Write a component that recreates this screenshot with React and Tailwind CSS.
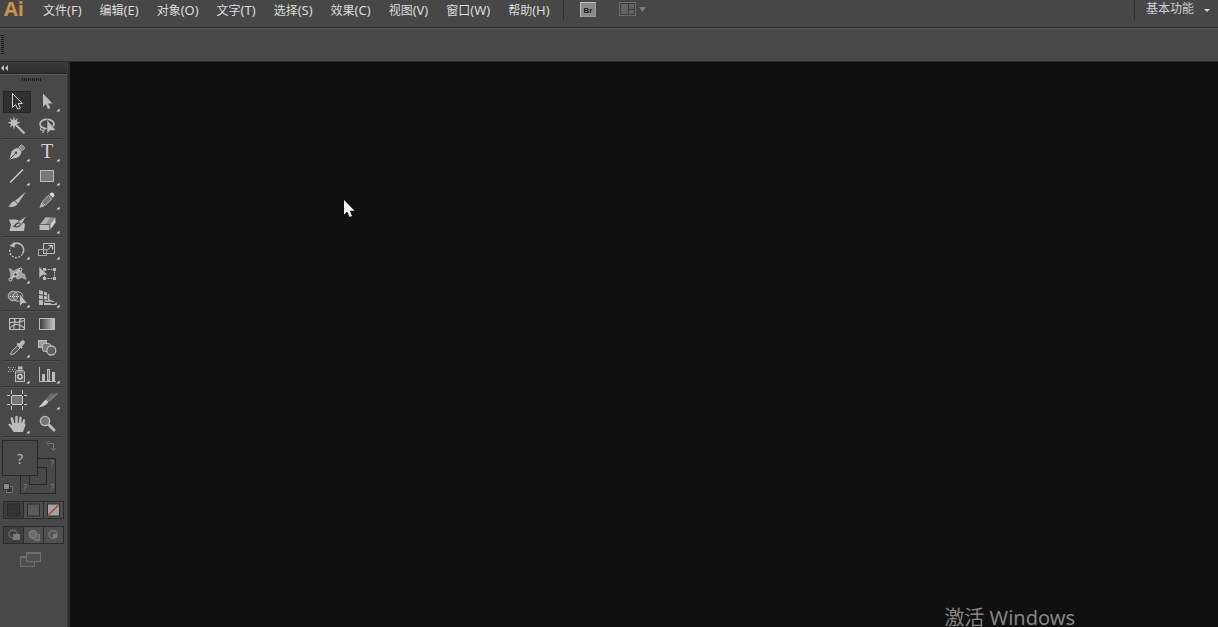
import React from "react";

const LIGHT = "#bcbcbc";
const MID = "#8a8a8a";
const DARK = "#484848";

const menus = [
  ["文件", "(F)"],
  ["编辑", "(E)"],
  ["对象", "(O)"],
  ["文字", "(T)"],
  ["选择", "(S)"],
  ["效果", "(C)"],
  ["视图", "(V)"],
  ["窗口", "(W)"],
  ["帮助", "(H)"],
];

const icons = {
  selection: (
    <path d="M10.5 3.5V17.5L13.5 14.6L15.8 19.2L18.4 18L16.2 13.5H20.3Z" fill="#303030" stroke="#d0d0d0" />
  ),
  direct: <path d="M11 3.5V16.8L13.8 14.2L16 19L18.3 18L16.2 13.4H20.5Z" fill={LIGHT} />,
  wand: (
    <g>
      <path d="M12 2.5L13 6.2L16 4L14.8 7.6L18.6 8.6L14.8 10L16 13.4L13 11.6L12 15.5L10.8 11.6L7.6 13.4L9.2 10L5.6 8.8L9.2 7.6L7.6 4L10.8 6.2Z" fill={LIGHT} />
      <path d="M14.5 11.5L22.5 19.5" stroke={LIGHT} strokeWidth="2.200" />
    </g>
  ),
  lasso: (
    <g>
      <ellipse cx="15" cy="10" rx="7" ry="4.600" fill="none" stroke={LIGHT} strokeWidth="1.700" />
      <path d="M9.500 13C7.500 14.500 8.500 16.500 11 16.500M11.500 14C13 15.500 12 17 10.500 19" fill="none" stroke={LIGHT} strokeWidth="1.200" />
      <path d="M15 5.500V20L18 16.500H24Z" fill={LIGHT} stroke={DARK} strokeWidth="0.600" />
    </g>
  ),
  pen: (
    <g>
      <path d="M7.5 19.500L9.500 11.500C11.500 9 14 8 16.500 8L19.500 11.200C19.500 13.500 18 16 15.500 17.500Z" fill={LIGHT} />
      <path d="M16.800 7.200L19.500 4.500L23 8L20.300 10.800Z" fill={MID} stroke={LIGHT} strokeWidth="0.800" />
      <path d="M8 19L13.300 13.500" stroke={DARK} />
      <circle cx="14" cy="12.800" r="1.300" fill={DARK} />
    </g>
  ),
  type: (
    <text x="15" y="18" textAnchor="middle" fontSize="20" fontFamily="Liberation Serif, serif" fill="#cfcfcf">T</text>
  ),
  line: <path d="M8 18.500L21 5.500" stroke="#d0d0d0" strokeWidth="1.400" />,
  rect: <rect x="8.5" y="6.5" width="13" height="11" fill="#777" stroke={LIGHT} />,
  brush: (
    <g>
      <path d="M24 3.800L16 15.500L13 12.800Z" fill={LIGHT} />
      <path d="M12.600 13.200L15.500 16C14 19 9.500 19.500 6 18.500C8.500 17.500 8.500 13.600 12.600 13.200Z" fill={LIGHT} />
    </g>
  ),
  pencil: (
    <g>
      <path d="M7.500 20L9.300 14.500L12.800 18Z" fill={LIGHT} />
      <path d="M9.800 14L16.500 7.300L20 10.700L13.200 17.500Z" fill="#777" stroke={LIGHT} strokeWidth="0.900" />
      <path d="M17.300 6.300C18.800 4 20.500 4 21.800 5.400C23 7 22.500 8.500 20.800 9.700Z" fill="#d8d8d8" />
    </g>
  ),
  blob: (
    <g>
      <path d="M7 7.500H14L19 9L23 12L22 19H7.500L9 13Z" fill={LIGHT} />
      <path d="M25 3.500L19.500 12.500L16 9.500Z" fill={LIGHT} stroke={DARK} strokeWidth="0.800" />
      <path d="M10.500 14.500C12.500 14.500 12.500 11 16 10.500L19 13C17.500 16 13.500 16 10.500 14.500Z" fill={DARK} />
      <path d="M13.500 14C14.500 13.500 15 11.800 16.300 11.500L17.800 12.800C17 14.300 15 14.500 13.500 14Z" fill={LIGHT} />
    </g>
  ),
  eraser: (
    <g>
      <path d="M13.500 5.500H23.500L18 12.500H8Z" fill="#8e8e8e" />
      <path d="M13.500 5.500H18.500L13 12.500H8Z" fill="#b4b4b4" />
      <path d="M7.500 13H17.500V18H7.500Z" fill="#bcbcbc" />
      <path d="M18 12.500L23.500 5.500V10.500L18 18Z" fill="#cfcfcf" />
      <path d="M7.500 12.500H18V18" fill="none" stroke="#555" strokeWidth="0.700" />
    </g>
  ),
  rotate: (
    <g>
      <path d="M12 6A6.600 6.600 0 0 1 20.500 15.500" fill="none" stroke={LIGHT} strokeWidth="1.500" />
      <path d="M20.300 16A6.600 6.600 0 0 1 8.500 10" fill="none" stroke={LIGHT} strokeWidth="1.600" strokeDasharray="1.800 1.500" />
      <path d="M7.500 8L12.800 3.500V9.500Z" fill={LIGHT} />
    </g>
  ),
  scale: (
    <g fill="none" stroke={LIGHT}>
      <rect x="11.500" y="5.500" width="11" height="10" />
      <rect x="6.500" y="11.500" width="8" height="6" stroke="#a8a8a8" />
      <path d="M15 12.500L20 7.500M16.500 7.500H20.500V11.500" stroke="#d6d6d6" />
    </g>
  ),
  width: (
    <g>
      <path d="M6.500 6.500C10 5.500 10 10 13 8C16 5.500 19 5.500 19.500 9C20 12.500 23 10.500 23.500 13.500C24 16.500 24.500 17 25 17.500C21 18 21 14.500 18.500 16.500C16 18.500 14 17 13.500 15C11 14.500 12 18 7 18.500C9 15 8.500 10 6.500 6.500Z" fill="#a4a4a4" />
      <path d="M8.500 17.500L18.500 7" stroke="#e0e0e0" />
      <g fill={DARK} stroke="#dadada">
        <circle cx="8.500" cy="17.500" r="1.500" />
        <circle cx="13.500" cy="12.500" r="1.800" />
        <circle cx="18.500" cy="7.500" r="1.500" />
      </g>
    </g>
  ),
  transform: (
    <g>
      <rect x="12.500" y="7.500" width="10" height="9" fill="none" stroke={LIGHT} strokeDasharray="2 1" />
      <path d="M11 6H14V9H11ZM21 6H24V9H21ZM11 15H14V18H11ZM21 15H24V18H21Z" fill={LIGHT} />
      <path d="M7 4.500V16.500L10.500 13H16Z" fill={LIGHT} stroke={DARK} strokeWidth="0.600" />
    </g>
  ),
  builder: (
    <g>
      <g fill="#707070" stroke={LIGHT}>
        <circle cx="11" cy="10" r="4.800" />
        <circle cx="16" cy="10.500" r="4.800" fillOpacity="0.300" />
      </g>
      <path d="M8 10.500H18" stroke="#ececec" strokeWidth="1.200" strokeDasharray="1 1" />
      <path d="M17.500 7.500V20.500L20.500 17.500H25.500Z" fill={LIGHT} stroke={DARK} strokeWidth="0.800" />
    </g>
  ),
  perspective: (
    <g>
      <path d="M7 4L11 5.200V19H7Z" fill={LIGHT} />
      <path d="M12 5.500L15 6.500V14.500L19 16V19H12Z" fill={LIGHT} />
      <path d="M16.500 8V14L24 17V19" fill="none" stroke={LIGHT} strokeWidth="1.500" />
      <path d="M7 8.500L15 10M7 13.500L15 14M13 15V16.500H24" fill="none" stroke={DARK} />
      <path d="M12 18.500H24" stroke={LIGHT} />
    </g>
  ),
  mesh: (
    <g fill="none" stroke={LIGHT}>
      <rect x="7.500" y="6.500" width="15" height="11" />
      <path d="M8 11C11 8 14 13 22 8.500M8 16.500C11 11 17 11.500 22.500 16M12 7C15 9 11 13 12 17.500M19 7C15 10 20 13 17 17.500" strokeWidth="1.200" />
    </g>
  ),
  gradient: (
    <g>
      <defs>
        <linearGradient id="toolGradient">
          <stop offset="0" stopColor="#383838" />
          <stop offset="1" stopColor="#cacaca" />
        </linearGradient>
      </defs>
      <rect x="7.500" y="6.500" width="15" height="11" fill="url(#toolGradient)" stroke={LIGHT} />
    </g>
  ),
  dropper: (
    <g>
      <path d="M8.500 18.500L9.500 15.500L15.500 9.500L18 12L12 18Z" fill="#5a5a5a" stroke={LIGHT} />
      <path d="M14.500 8L16 6.800L17.200 7.600L19.500 4.800C21 3.300 24 5.500 22.500 7.600L20 10.200L20.800 11.500L19.300 12.800Z" fill={LIGHT} />
    </g>
  ),
  blend: (
    <g>
      <rect x="6.500" y="4.500" width="8" height="7" fill="#a0a0a0" stroke={LIGHT} />
      <rect x="10.500" y="7.500" width="8" height="8" rx="2" fill="#777" stroke={LIGHT} />
      <circle cx="19.300" cy="14.500" r="4.500" fill="#5f5f5f" stroke={LIGHT} strokeWidth="1.300" />
    </g>
  ),
  spray: (
    <g>
      <path d="M6 5.500H14M6 9.500H14M7.500 7.500H14" stroke={LIGHT} strokeWidth="1.200" strokeDasharray="1 1.500" />
      <path d="M16 4.500H20.500V7.500H16Z" fill={LIGHT} />
      <rect x="13.500" y="10" width="9" height="9.500" fill="#555" stroke={LIGHT} />
      <path d="M14.500 8.500H21.500" stroke={LIGHT} />
      <circle cx="18" cy="14.800" r="2.200" fill={DARK} stroke="#d0d0d0" strokeWidth="1.500" />
    </g>
  ),
  graph: (
    <g>
      <path d="M7.500 5V19.500H24" fill="none" stroke={LIGHT} />
      <path d="M10 12H13V19H10ZM20 10H23V19H20Z" fill={LIGHT} />
      <rect x="15.500" y="7.500" width="2" height="11" fill="#777" stroke={LIGHT} />
    </g>
  ),
  artboard: (
    <g>
      <rect x="10" y="8" width="10" height="8" fill="#777" />
      <path d="M5 7.500H8M10 7.500H20M22 7.500H25M5 16.500H8M10 16.500H20M22 16.500H25M9.500 2V6M9.500 8V16M9.500 18V22M20.500 2V6M20.500 8V16M20.500 18V22" stroke="#c8c8c8" />
    </g>
  ),
  slice: (
    <g>
      <path d="M6.500 19.500L13.500 11.500L16.500 13.500C15 17 11 18.500 6.500 19.500Z" fill="#d0d0d0" />
      <path d="M14.500 10.500L18.500 5.500H25.500L17.500 13Z" fill="#6c6c6c" />
      <path d="M14.500 10.500L17.500 13L25.500 5.500" fill="none" stroke="#949494" />
    </g>
  ),
  hand: (
    <g fill={LIGHT}>
      <path d="M11.500 20C10 16.500 8 15 6 12.500C7 10.800 9.500 12 11 14H20.500C21 12.500 22 11 23.500 11.500C23.500 15 21.500 17 21 20Z" />
      <path d="M10.500 11H21.500L21 16H11Z" />
      <path d="M11.500 13L9.800 6.500M14.500 12V5M17.800 12L18.500 5.800M20.300 13.500L22 8.500" stroke={LIGHT} strokeWidth="2.500" strokeLinecap="round" />
    </g>
  ),
  zoom: (
    <g>
      <path d="M16.500 12.500L22 18" stroke={LIGHT} strokeWidth="3" strokeLinecap="round" />
      <circle cx="13" cy="9" r="4.600" fill="#777" stroke={LIGHT} strokeWidth="1.400" />
    </g>
  ),
};

const groups = [
  [["selection", "选择工具", false], ["direct", "直接选择工具", true], ["wand", "魔棒工具", false], ["lasso", "套索工具", false]],
  [["pen", "钢笔工具", true], ["type", "文字工具", true], ["line", "直线段工具", true], ["rect", "矩形工具", true], ["brush", "画笔工具", false], ["pencil", "铅笔工具", true], ["blob", "斑点画笔工具", false], ["eraser", "橡皮擦工具", true]],
  [["rotate", "旋转工具", true], ["scale", "比例缩放工具", true], ["width", "宽度工具", true], ["transform", "自由变换工具", false], ["builder", "形状生成器工具", true], ["perspective", "透视网格工具", true]],
  [["mesh", "网格工具", false], ["gradient", "渐变工具", false], ["dropper", "吸管工具", true], ["blend", "混合工具", false]],
  [["spray", "符号喷枪工具", true], ["graph", "柱形图工具", true]],
  [["artboard", "画板工具", false], ["slice", "切片工具", true], ["hand", "抓手工具", true], ["zoom", "缩放工具", false]],
];

function Tool({ name, label, more }) {
  const active = name === "selection";
  return (
    <button aria-label={label} aria-pressed={active} className="block h-6 w-[30px]">
      <svg viewBox="0 0 30 24" className="block h-6 w-[30px]">
        {active && <rect x="1.500" y="1.500" width="27" height="21" fill="#303030" stroke="#252525" />}
        {icons[name]}
        {more && <path d="M27.500 18.500V21.500H24.500Z" fill="#e6e6e6" />}
      </svg>
    </button>
  );
}

function MenuBar() {
  return (
    <header className="flex h-7 items-start justify-between border-b border-[#2a2a2a] bg-[#474747]">
      <div className="flex items-start">
        <span className="w-[35px] pl-1 font-['Open_Sans',sans-serif] text-[20px] leading-[18px] font-bold text-[#cb9347]">Ai</span>
        <nav className="flex gap-[2px]">
          {menus.map(([name, key]) => (
            <button key={name} className="px-2 text-[12px] leading-5 whitespace-nowrap text-[#dcdcdc]">
              {name}<span className="text-[13px]">{key}</span>
            </button>
          ))}
        </nav>
        <div className="ml-[5px] h-5 border-l border-[#2e2e2e]" />
        <button aria-label="Bridge" className="ml-4 block">
          <svg viewBox="0 0 16 20" className="block h-5 w-4">
            <rect x="0.500" y="2.500" width="15" height="14" fill="#8a8a8a" stroke="#bdbdbd" />
            <path d="M1 16.500H15.500V3" fill="none" stroke="#999" />
            <text x="8" y="13" textAnchor="middle" fontSize="8" fontWeight="bold" fontFamily="Liberation Sans, sans-serif" fill="#1c1c1c">Br</text>
          </svg>
        </button>
        <button aria-label="排列文档" className="ml-[22px] block">
          <svg viewBox="0 0 30 20" className="block h-5 w-[30px]">
            <rect x="1.500" y="2.500" width="16" height="13" fill="#3c3c3c" stroke="#6e6e6e" />
            <path d="M3 4H10V14H3ZM11 4H16V9H11ZM11 10H16V14H11Z" fill="#636363" />
            <path d="M21 7H28L24.500 12Z" fill="#7d7d7d" />
          </svg>
        </button>
      </div>
      <div className="flex items-start border-l border-[#2e2e2e]">
        <button className="flex h-5 items-start gap-[10px] pr-2 pl-[11px] text-[12px] leading-[18px] text-[#cfcfcf]">
          基本功能
          <svg viewBox="0 0 6 16" className="h-4 w-[6px]"><path d="M0 9H6L3 12Z" fill="#d8d8d8" /></svg>
        </button>
      </div>
    </header>
  );
}

function ColorControls() {
  return (
    <div className="relative h-[63px]">
      <button aria-label="描边" className="absolute top-[20px] left-[18px]">
        <svg viewBox="0 0 36 36" className="block h-9 w-9" fontFamily="Noto Sans, sans-serif" fontSize="9" fill="#808080">
          <path d="M0.500 0.500H35.500V35.500H0.500ZM9.500 9.500V26.500H26.500V9.500Z" fill="#484848" fillRule="evenodd" stroke="#272727" />
          <text x="30" y="9">?</text>
          <text x="3" y="33">?</text>
          <text x="30" y="33">?</text>
        </svg>
      </button>
      <button aria-label="填色" className="absolute top-[2px] left-0 flex h-9 w-9 items-center justify-center border border-[#272727] bg-[#484848] text-[14px] text-[#b5b5b5]">?</button>
      <button aria-label="互换填色和描边" className="absolute top-[2px] left-[43px]">
        <svg viewBox="0 0 12 12" className="block h-3 w-3" fill="none" stroke="#757575">
          <path d="M3 3.500H8.500V10M4 1L1.500 3.500L4 6M6 8L8.500 10.500L11 8" />
        </svg>
      </button>
      <button aria-label="默认填色和描边" className="absolute top-[44px] left-0">
        <svg viewBox="0 0 12 12" className="block h-3 w-3">
          <rect x="4.500" y="4.500" width="6" height="6" fill="#333" stroke="#777" />
          <rect x="1.500" y="1.500" width="6" height="6" fill="#8a8a8a" stroke="#333" />
        </svg>
      </button>
    </div>
  );
}

const fillModes = [
  ["颜色", <rect x="3.500" y="2" width="12" height="12" fill="#343434" stroke="#2a2a2a" />],
  ["渐变", <rect x="3.500" y="2" width="12" height="12" fill="#5a5a5a" stroke="#2d2d2d" />],
  ["无", <g><rect x="3.500" y="2" width="12" height="12" fill="#a5a5a5" stroke="#2a2a2a" /><path d="M4 13.500L15 2.500" stroke="#a84a36" strokeWidth="1.600" /></g>],
];

const drawModes = [
  ["正常绘图", <g><circle cx="9" cy="7" r="4" fill="none" stroke="#6a6a6a" strokeWidth="1.500" /><rect x="9" y="7" width="7" height="6" fill="#7c7c7c" /></g>],
  ["背面绘图", <g><path d="M10 13H15V7" fill="none" stroke="#757575" strokeWidth="2" /><circle cx="9" cy="7.500" r="4" fill="#6c6c6c" stroke="#858585" /></g>],
  ["内部绘图", <g><circle cx="9" cy="7.500" r="4" fill="#555" stroke="#777" strokeWidth="1.500" /><path d="M9 7H13V11H9Z" fill="#808080" /></g>],
];

function ModeRow({ items }) {
  return (
    <div className="ml-px flex h-[18px] w-[61px] border border-[#2b2b2b]">
      {items.map(([label, icon], i) => (
        <button key={label} aria-label={label} className={i === 0 ? "w-5 bg-[#3e3e3e]" : "w-5 border-l border-[#2b2b2b] bg-[#505050]"}>
          <svg viewBox="0 0 19 16" className="block h-4 w-[19px]">{icon}</svg>
        </button>
      ))}
    </div>
  );
}

function ToolPanel() {
  return (
    <aside className="w-[70px] shrink-0 border-r-2 border-[#2c2c2c] bg-[#484848]">
      <div className="h-full border-r border-[#3a3a3a]">
        <button aria-label="折叠面板" className="block h-3 w-full border-b border-[#252525] bg-linear-to-b from-[#393939] to-[#303030]">
          <svg viewBox="0 0 12 11" className="block h-[11px] w-3"><path d="M4 3V9L1 6ZM8 3V9L5 6Z" fill="#c4c4c4" /></svg>
        </button>
        <div className="flex h-4 justify-center border-t border-[#5a5a5a] pt-[3px] pr-1">
          <svg viewBox="0 0 20 3" className="h-[3px] w-5"><path d="M0 1.500H20" stroke="#1c1c1c" strokeWidth="3" strokeDasharray="1 1" /></svg>
        </div>
        <div className="pl-[2px]">
          {groups.map((g, i) => (
            <div key={i} className="grid w-[60px] grid-cols-2">
              {g.map(([name, label, more]) => <Tool key={name} name={name} label={label} more={more} />)}
              <div className="col-span-2 h-[2px] border-t border-b border-t-[#363636] border-b-[#525252]" />
            </div>
          ))}
          <ColorControls />
          <ModeRow items={fillModes} />
          <div className="h-[7px]" />
          <ModeRow items={drawModes} />
          <button aria-label="更改屏幕模式" className="mt-[7px] ml-[17px] block">
            <svg viewBox="0 0 24 18" className="block h-[18px] w-6" fill="#505050" stroke="#707070">
              <rect x="1.500" y="5.500" width="14" height="10" />
              <rect x="7.500" y="1.500" width="14" height="9" />
              <path d="M8 2.500H21M2 6.500H7" />
            </svg>
          </button>
        </div>
      </div>
    </aside>
  );
}

export default function App() {
  return (
    <div className="flex h-screen flex-col overflow-hidden bg-[#101010] font-['Noto_Sans','Noto_Sans_CJK_SC',sans-serif]">
      <MenuBar />
      <div className="flex h-[34px] shrink-0 items-center border-t border-b border-t-[#5c5c5c] border-b-[#2a2a2a] bg-[#494949]">
        <svg viewBox="0 0 4 20" className="h-5 w-1"><path d="M2.500 0V20" stroke="#1c1c1c" strokeWidth="3" strokeDasharray="1 1" /></svg>
      </div>
      <div className="flex min-h-0 flex-1">
        <ToolPanel />
        <main className="relative flex-1 overflow-hidden bg-[#101010]">
          <svg viewBox="0 0 12 18" className="absolute top-[138px] left-[273px] h-[18px] w-3">
            <path d="M1 0V14.500L4.200 11.600L6.500 17L9 16L6.800 10.800H11.500Z" fill="#f4f4f4" />
          </svg>
          <p className="absolute right-[143px] bottom-[-6px] text-[20px] leading-[30px] whitespace-nowrap text-[#868686]">激活 Windows</p>
        </main>
      </div>
    </div>
  );
}
